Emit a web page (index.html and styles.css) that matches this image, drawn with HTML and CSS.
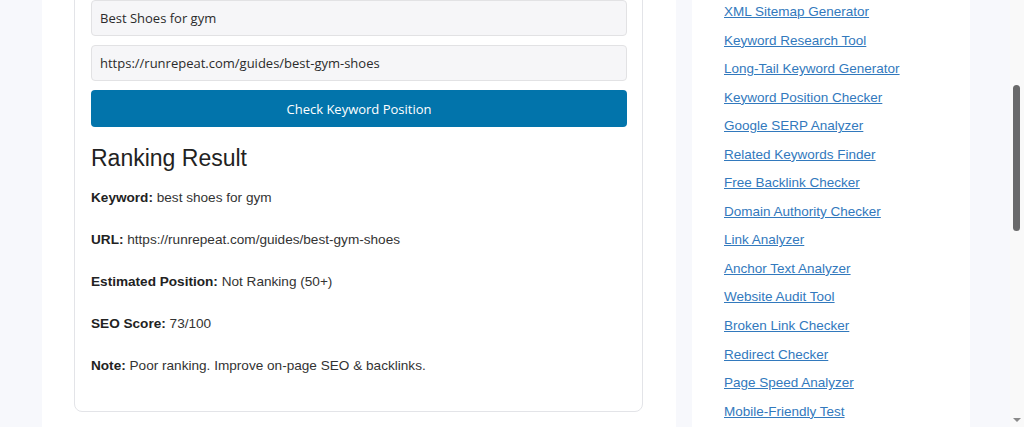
FILE: index.html
```html
<!DOCTYPE html>
<html lang="en">
<head>
<meta charset="utf-8">
<title>Keyword Position Checker</title>
<link rel="stylesheet" href="styles.css">
</head>
<body>
<div class="page">
  <main class="main">
    <section class="card">
      <input class="field" type="text" value="Best Shoes for gym">
      <input class="field" type="text" value="https://runrepeat.com/guides/best-gym-shoes">
      <button class="btn" type="button">Check Keyword Position</button>
      <h3 class="result-title">Ranking Result</h3>
      <p class="row"><strong>Keyword:</strong> best shoes for gym</p>
      <p class="row"><strong>URL:</strong> https://runrepeat.com/guides/best-gym-shoes</p>
      <p class="row"><strong>Estimated Position:</strong> Not Ranking (50+)</p>
      <p class="row"><strong>SEO Score:</strong> 73/100</p>
      <p class="row"><strong>Note:</strong> Poor ranking. Improve on-page SEO &amp; backlinks.</p>
    </section>
  </main>
  <aside class="sidebar">
    <ul class="links">
      <li><a href="#">XML Sitemap Generator</a></li>
      <li><a href="#">Keyword Research Tool</a></li>
      <li><a href="#">Long-Tail Keyword Generator</a></li>
      <li><a href="#">Keyword Position Checker</a></li>
      <li><a href="#">Google SERP Analyzer</a></li>
      <li><a href="#">Related Keywords Finder</a></li>
      <li><a href="#">Free Backlink Checker</a></li>
      <li><a href="#">Domain Authority Checker</a></li>
      <li><a href="#">Link Analyzer</a></li>
      <li><a href="#">Anchor Text Analyzer</a></li>
      <li><a href="#">Website Audit Tool</a></li>
      <li><a href="#">Broken Link Checker</a></li>
      <li><a href="#">Redirect Checker</a></li>
      <li><a href="#">Page Speed Analyzer</a></li>
      <li><a href="#">Mobile-Friendly Test</a></li>
    </ul>
  </aside>
</div>
<div class="scrollbar">
  <div class="thumb"></div>
  <div class="arrow-down"></div>
</div>
</body>
</html>
```

FILE: styles.css
```css
html, body {
  margin: 0;
  padding: 0;
  height: 100%;
  overflow: hidden;
}
body {
  background: #f7f8fc;
  font-family: "Liberation Sans", Arial, sans-serif;
  color: #333;
}
.page {
  display: flex;
  align-items: flex-start;
  gap: 16px;
  padding-left: 42px;
}
.main {
  width: 634px;
  background: #fff;
  padding: 0 33px 0 32px;
  box-sizing: border-box;
  height: 427px;
}
.card {
  border: 1px solid #e3e4e8;
  border-radius: 8px;
  padding: 19px 15px 31px 16px;
  margin-top: -20px;
  display: flex;
  flex-direction: column;
  background: #fff;
}
.field {
  height: 36px;
  box-sizing: border-box;
  border: 1px solid #e2e2e4;
  border-radius: 4px;
  background: #f6f6f8;
  padding: 0 8px;
  font-family: "Open Sans", "Noto Sans", sans-serif;
  font-size: 13px;
  color: #2b2b2b;
  margin-bottom: 9px;
  outline: none;
}
.btn {
  height: 37px;
  border: none;
  border-radius: 4px;
  background: #0274ab;
  color: #fff;
  font-family: "Open Sans", "Noto Sans", sans-serif;
  font-size: 13px;
  cursor: pointer;
}
.result-title {
  font-family: "Liberation Sans", Arial, sans-serif;
  font-weight: 400;
  font-size: 23px;
  color: #222;
  margin: 17px 0 12px;
  line-height: 28px;
}
.row {
  margin: 0 0 14px;
  font-size: 13.6px;
  line-height: 28px;
  color: #333;
}
.row:last-child {
  margin-bottom: 0;
}
.row strong {
  color: #222;
}
.sidebar {
  width: 278px;
  background: #fff;
  height: 427px;
  padding: 0 20px 0 32px;
  box-sizing: border-box;
}
.links {
  list-style: none;
  margin: -2px 0 0;
  padding: 0;
}
.links li {
  line-height: 28.55px;
  font-size: 13.5px;
}
.links a {
  color: #3279bd;
  text-decoration: underline;
}
.scrollbar {
  position: fixed;
  top: 0;
  right: 0;
  width: 14px;
  height: 427px;
  background: #f9f9f9;
}
.thumb {
  position: absolute;
  top: 85px;
  left: 3px;
  width: 7px;
  height: 146px;
  border-radius: 4px;
  background: #6a6a6a;
}
.arrow-down {
  position: absolute;
  bottom: 5px;
  left: 3px;
  width: 0;
  height: 0;
  border-left: 4px solid transparent;
  border-right: 4px solid transparent;
  border-top: 4px solid #8a8a8a;
}
```
